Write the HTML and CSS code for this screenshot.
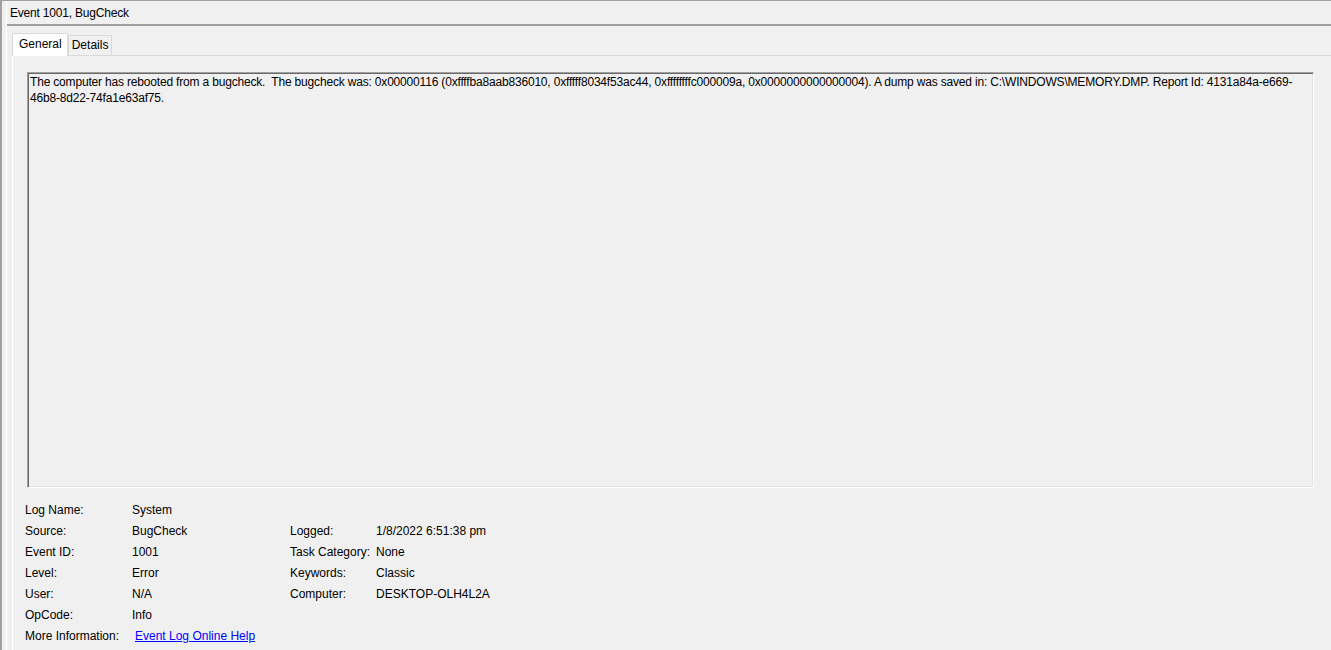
FILE: index.html
```html
<!DOCTYPE html>
<html lang="en">
<head>
    <meta charset="UTF-8">
    <title>Event 1001, BugCheck</title>
    <link rel="stylesheet" href="styles.css">
</head>
<body>
    <div class="window">
        <div class="inner">

            <!-- Title -->
            <div class="title">Event 1001, BugCheck</div>

            <!-- Tabs -->
            <div class="tabs">
                <div class="tab active">General</div>
                <div class="tab">Details</div>
            </div>

            <div class="panel">
                <div class="message">The computer has rebooted from a bugcheck.&nbsp; The bugcheck was: 0x00000116 (0xffffba8aab836010, 0xfffff8034f53ac44, 0xffffffffc000009a, 0x0000000000000004). A dump was saved in: C:\WINDOWS\MEMORY.DMP. Report Id: 4131a84a-e669-<br>46b8-8d22-74fa1e63af75.</div>

                <div class="props">
                    <span>Log Name:</span><span>System</span><span></span><span></span>
                    <span>Source:</span><span>BugCheck</span><span>Logged:</span><span>1/8/2022 6:51:38 pm</span>
                    <span>Event ID:</span><span>1001</span><span>Task Category:</span><span>None</span>
                    <span>Level:</span><span>Error</span><span>Keywords:</span><span>Classic</span>
                    <span>User:</span><span>N/A</span><span>Computer:</span><span>DESKTOP-OLH4L2A</span>
                    <span>OpCode:</span><span>Info</span><span></span><span></span>
                    <span>More Information:</span><span><a href="#" class="link">Event Log Online Help</a></span><span></span><span></span>
                </div>
            </div>
        </div>
    </div>
</body>
</html>
```

FILE: styles.css
```css
html, body {
    margin: 0;
    padding: 0;
    background-color: #f0f0f0;
    overflow: hidden;
}

body {
    font-family: 'Liberation Sans', Arial, sans-serif;
    font-size: 12px;
    color: #000;
}

.window {
    height: 649px;
    border-top: 1px solid #a0a0a0;
    border-left: 2px solid #a0a0a0;
    padding-left: 4px;
}

.inner {
    height: 100%;
    border-left: 1px solid #fff;
    display: flex;
    flex-direction: column;
}

.title {
    height: 21px;
    line-height: 21px;
    padding: 2px 0 0 3px;
    border-bottom: 2px solid #a0a0a0;
    letter-spacing: -0.2px;
}

.tabs {
    display: flex;
    align-items: flex-end;
    margin-top: 7px;
    padding-left: 5px;
    position: relative;
    z-index: 1;
    margin-bottom: -1px;
}

.tab {
    height: 19px;
    line-height: 18px;
    padding: 0 3px;
    border: 1px solid #d9d9d9;
    border-bottom: none;
    background-color: #f0f0f0;
    margin-bottom: 1px;
}

.tab.active {
    height: 22px;
    line-height: 20px;
    padding: 0 5px 0 6px;
    background-color: #fff;
    border-color: #d9d9d9;
    margin-bottom: 0;
}

.panel {
    flex: 1;
    margin-left: 5px;
    border-top: 1px solid #d9d9d9;
    border-left: 1px solid #fff;
    padding: 16px 17px 0 14px;
}

.message {
    height: 412px;
    line-height: 16px;
    border: 1px solid;
    border-color: #a0a0a0 #fff #fff #a0a0a0;
    box-shadow: inset 1px 1px 0 #696969, inset -1px -1px 0 #e3e3e3;
    padding: 1px 2px;
    white-space: nowrap;
    overflow: hidden;
    letter-spacing: -0.18px;
}

.props {
    display: grid;
    grid-template-columns: 107px 158px 86px auto;
    grid-auto-rows: 21px;
    line-height: 21px;
    margin-top: 12px;
    margin-left: -2px;
}

.link {
    color: #0000ff;
    margin-left: 3px;
}
```
